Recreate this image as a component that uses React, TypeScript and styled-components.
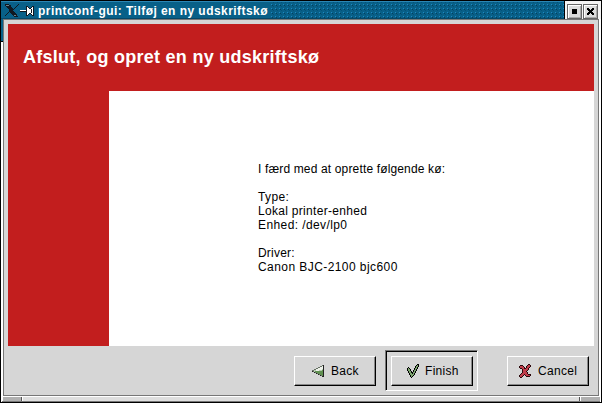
import React from "react";
import styled, { createGlobalStyle } from "styled-components";

const Global = createGlobalStyle`
  *{box-sizing:border-box}
  body{margin:0;background:#000;overflow:hidden;font-family:"Liberation Sans",Arial,sans-serif}
`;
const Frame = styled.main`
  width:602px;height:403px;display:flex;flex-direction:column;
  background:linear-gradient(#086088 0 40px,#000 40px 41px,#fff 41px) 0 0/2px 100% no-repeat,#fff;
  border:1px solid #000;
`;
const TitleBar = styled.header`
  height:18px;flex:none;display:flex;align-items:stretch;background:#086088;
  border-top:1px solid #2b86b4;border-bottom:1px solid #064868;
`;
const TitleIcons = styled.div`
  width:37px;flex:none;padding:2px 0 0 4px;line-height:0;
`;
const TitleText = styled.h1`
  margin:0;flex:none;padding-top:1px;font-size:12px;line-height:16px;font-weight:700;color:#fff;white-space:pre;
  width:232px;letter-spacing:.45px;font-variant-ligatures:none;
`;
const Dots = styled.div`
  flex:1;margin-left:1px;
  background-image:radial-gradient(circle at .5px .5px,#1e88c4 0 .6px,transparent .6px),
    radial-gradient(circle at .5px .5px,#04405e 0 .6px,transparent .6px),
    radial-gradient(circle at .5px .5px,#04507a 0 .6px,transparent .6px);
  background-size:4px 4px;background-position:0 2px,1px 3px,2px 0;
`;
const Controls = styled.div`
  display:flex;gap:1px;width:37px;padding:3px 0 0 2px;background:#f4f4f4;border-left:1px solid #000;
  margin-top:-1px;margin-bottom:-1px;
`;
const Control = styled.button`
  width:15px;height:15px;padding:0;border:1px solid #666;background:#dcdcdc;display:grid;place-items:center;
  box-shadow:inset 1px 1px #fff,inset -1px -1px #aaa;
`;
const Client = styled.section`
  flex:1;min-height:0;margin:0 2px 0 2px;border:1px solid #777;background:#d6d6d6;padding:4px;
  display:flex;flex-direction:column;
`;
const Banner = styled.header`
  height:67px;flex:none;background:#c21e1e;padding:21px 0 0 15px;
`;
const Heading = styled.h2`
  margin:0;color:#fff;font-size:18px;line-height:24px;font-weight:700;white-space:pre;letter-spacing:.27px;
  font-variant-ligatures:none;
`;
const Middle = styled.div`height:255px;flex:none;display:flex;`;
const Side = styled.aside`width:101px;background:#c21e1e;`;
const Page = styled.article`
  flex:1;background:#fff;padding:71px 0 0 149px;
`;
const Line = styled.p<{ $spacing?: number }>`
  margin:0;height:14px;line-height:14px;font-size:12px;color:#000;white-space:pre;
  letter-spacing:${p => p.$spacing ?? 0}px;
`;
const Actions = styled.footer`
  display:flex;justify-content:flex-end;align-items:flex-start;padding:4px 5px 0 0;
`;
const DefaultRing = styled.div`
  width:93px;height:41px;padding:5px;border:1px solid;border-color:#777 #fff #fff #777;
  box-shadow:inset 1px 1px #000;margin:0 29px 0 9px;
`;
const Push = styled.button<{ $pad: number }>`
  width:82px;height:30px;margin:0;border:1px solid;border-color:#fff #000 #000 #fff;background:#d6d6d6;
  box-shadow:inset -1px -1px #888;display:flex;align-items:center;padding:0 0 0 ${p => p.$pad}px;
  font:12px/14px "Liberation Sans",Arial,sans-serif;color:#000;
`;
const Offset = styled.div`padding-top:6px;`;
const Label = styled.span<{ $gap: number }>`
  margin-left:${p => p.$gap}px;letter-spacing:.3px;
`;
const ResizeBar = styled.div`
  height:6px;flex:none;display:grid;grid-template-columns:20px 1fr 20px;border-top:1px solid #fff;border-bottom:1px solid #777;margin:0 1px;
`;
const Grip = styled.i<{ $tone: string; $last?: boolean }>`
  background:${p => p.$tone};border-right:${p => p.$last ? 0 : 1}px solid #555;box-shadow:inset 1px 0 #fff;
`;

function Pixels({ rows, colors }: { rows: string[]; colors: Record<string, string> }) {
  const w = Math.max(...rows.map(r => r.length));
  return (
    <svg width={w} height={rows.length} viewBox={`0 0 ${w} ${rows.length}`} shapeRendering="crispEdges">
      {rows.flatMap((r, y) => [...r].map((c, x) => colors[c] ? <rect key={`${x}-${y}`} x={x} y={y} width="1" height="1" fill={colors[c]} /> : null))}
    </svg>
  );
}
const back = [
  "..........dk",
  "........ddwk",
  "......ddwwwk",
  "....ddwwwwwk",
  "..ddwwwwwwlk",
  "ddllwwwlllgk",
  "kdlggggggggk",
  "..kdgggggggk",
  "....kdgggggk",
  "......kdgggk",
  "........kdgk",
  "..........kk",
];
const check = [
  "..........kk",
  ".........kgk",
  "........kggk",
  ".k......kgk.",
  "kgk....kggk.",
  "kggk...kgk..",
  "kggk..kggk..",
  ".kggk.kgk...",
  ".kggkkggk...",
  "..kggkgk....",
  "..kggggk....",
  "...kggk.....",
  "...kgk......",
  "....k.......",
];
const cross = [
  ".........kk..",
  ".kkk....krrk.",
  "krrrk..krrrk.",
  "krrrrk.krrk..",
  ".kkrrkkrrk...",
  "...krrrrrk...",
  "...krrrrk....",
  "...krrrk.....",
  "...krrrrk....",
  "..krrrrrk....",
  ".krrrkrrrkkk.",
  "krrrk.krrrrk.",
  "krrk...kkkk..",
  ".kk..........",
];
const titleGlyphs = [
  "kkkk.........k...............",
  "kssskk......k................",
  ".kkkkk.....k.........kk....kk",
  "..kkkkk...k..........kwk..kwk",
  "...kkkkk.k...........kwwkkwwk",
  "....kkkkk............kwwwwkwk",
  "....kkkk.......wwwwwwkwwwwkwk",
  "....kkkkk......kkkkkkkwwwwkwk",
  "...k.kkkkk...........kwwwwkwk",
  "..k...kkkkk..........kwwkkwwk",
  ".k.....kkkkk.........kwk..kwk",
  "k.......kssk.........kk....kk",
  ".........kkkk................",
];
const closeGlyph = ["kk...kk", "kkk.kkk", ".kkkkk.", "..kkk..", ".kkkkk.", "kkk.kkk", "kk...kk"];
const square = ["kkkkk", "kkkkk", "kkkkk", "kkkkk", "kkkkk"];

export default function App() {
  return (
    <>
      <Global />
      <Frame>
        <TitleBar>
          <TitleIcons><Pixels rows={titleGlyphs} colors={{ k: "#101820", s: "#6a8490", w: "#fff" }} /></TitleIcons>
          <TitleText>printconf-gui: Tilføj en ny udskriftskø</TitleText>
          <Dots />
          <Controls>
            <Control aria-label="Maximize"><Pixels rows={square} colors={{ k: "#000" }} /></Control>
            <Control aria-label="Close"><Pixels rows={closeGlyph} colors={{ k: "#000" }} /></Control>
          </Controls>
        </TitleBar>
        <Client>
          <Banner><Heading>Afslut, og opret en ny udskriftskø</Heading></Banner>
          <Middle>
            <Side />
            <Page>
              <Line $spacing={0.15}>I færd med at oprette følgende kø:</Line>
              <Line> </Line>
              <Line $spacing={0.4}>Type:</Line>
              <Line $spacing={0.3}>Lokal printer-enhed</Line>
              <Line $spacing={0.4}>Enhed: /dev/lp0</Line>
              <Line> </Line>
              <Line $spacing={0.2}>Driver:</Line>
              <Line $spacing={0.43}>Canon BJC-2100 bjc600</Line>
            </Page>
          </Middle>
          <Actions>
            <Offset><Push $pad={17}><Pixels rows={back} colors={{ k: "#222", d: "#667064", w: "#eef2ea", l: "#b5ccb0", g: "#609050" }} /><Label $gap={7}>Back</Label></Push></Offset>
            <DefaultRing><Push $pad={15}><Pixels rows={check} colors={{ k: "#000", g: "#7da56f" }} /><Label $gap={6}>Finish</Label></Push></DefaultRing>
            <Offset><Push $pad={11}><Pixels rows={cross} colors={{ k: "#2a080c", r: "#c03d4b" }} /><Label $gap={6}>Cancel</Label></Push></Offset>
          </Actions>
        </Client>
        <ResizeBar><Grip $tone="#b0b0b0" /><Grip $tone="#dedede" /><Grip $tone="#b0b0b0" $last /></ResizeBar>
      </Frame>
    </>
  );
}
